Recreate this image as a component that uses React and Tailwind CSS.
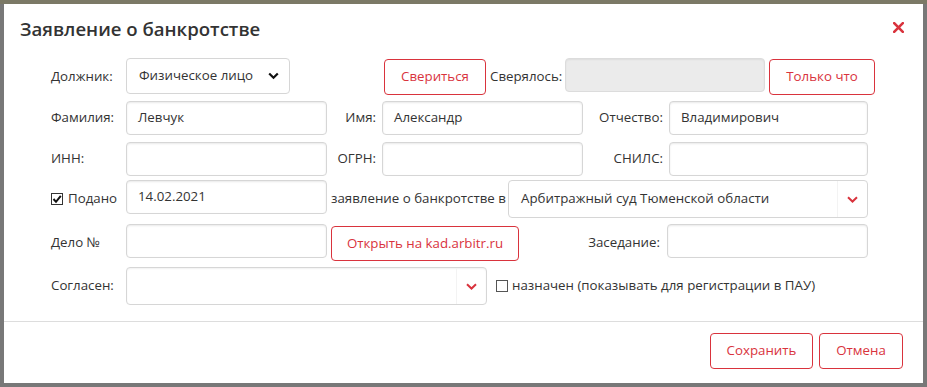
import React from "react";

const F = { fontFamily: '"Open Sans", "Noto Sans", sans-serif' };

function Input({ w, value = "", className = "" }) {
  return (
    <div
      className={`h-[34px] ${w} shrink-0 rounded-[4px] border border-[#d6d6d6] bg-white pl-[11px] flex items-center text-[13.3px] text-[#333] shadow-[inset_0_1px_2px_rgba(0,0,0,0.09)] ${className}`}
    >
      {value}
    </div>
  );
}

function Btn({ w, h = "h-[36px]", children, className = "" }) {
  return (
    <div
      className={`${w} ${h} shrink-0 rounded-[4px] border border-[#d9333d] text-[#d9333d] text-[13.3px] flex items-center justify-center ${className}`}
    >
      {children}
    </div>
  );
}

function RedChevron() {
  return (
    <svg width="11" height="7" viewBox="0 0 11 7">
      <path d="M1 1.2 L5.5 5.5 L10 1.2" fill="none" stroke="#d9333d" strokeWidth="2" />
    </svg>
  );
}

function Label({ w, children, right = false, pr = "" }) {
  return (
    <div className={`${w} shrink-0 text-[13.3px] text-[#333] flex items-center h-full whitespace-nowrap ${right ? "justify-end" : ""} ${pr}`}>
      {children}
    </div>
  );
}

export default function App() {
  return (
    <div style={F} className="w-[927px] h-[387px] bg-[#787878] border-t-[4px] border-t-[#7b7966] pl-[4px] pr-[4px] pb-[4px] overflow-hidden">
      <div className="relative w-[919px] h-[379px] bg-white">
        {/* header */}
        <div className="h-[54px] pl-[16px] pt-[13px]">
          <div className="text-[18.6px] leading-[24px] font-semibold text-[#333]">Заявление о банкротстве</div>
        </div>
        <div className="absolute left-[889px] top-[18px]">
          <svg width="11" height="11" viewBox="0 0 11 11">
            <path d="M1.2 1.2 L9.8 9.8 M9.8 1.2 L1.2 9.8" stroke="#d9333d" strokeWidth="2.6" strokeLinecap="square" />
          </svg>
        </div>

        <div className="pl-[47px]">
          {/* row 1 */}
          <div className="flex h-[37px] items-start">
            <Label w="w-[75px]">
              <span className="h-[36px] flex items-center">Должник:</span>
            </Label>
            <div className="w-[164px] h-[36px] shrink-0 rounded-[4px] border border-[#d6d6d6] bg-white flex items-center justify-between pl-[12px] pr-[10px] text-[13.3px] text-[#333]">
              <span>Физическое лицо</span>
              <svg width="11" height="8" viewBox="0 0 11 8">
                <path d="M1.2 1.5 L5.5 5.8 L9.8 1.5" fill="none" stroke="#111" strokeWidth="2.2" />
              </svg>
            </div>
            <div className="w-[94px] shrink-0" />
            <Btn w="w-[102px]" className="mt-[1px]">Свериться</Btn>
            <Label w="w-[79px]" pr="pl-[4px]">
              <span className="h-[34px] flex items-center">Сверялось:</span>
            </Label>
            <div className="w-[200px] h-[34px] shrink-0 rounded-[4px] border border-[#dcdcdc] bg-[#ebebeb] shadow-[inset_0_1px_2px_rgba(0,0,0,0.06)]" />
            <Btn w="w-[106px]" className="ml-[4px] mt-[1px]">Только что</Btn>
          </div>

          {/* row 2 */}
          <div className="flex h-[34px] mt-[6px] items-center">
            <Label w="w-[75px]">Фамилия:</Label>
            <Input w="w-[201px]" value="Левчук" />
            <Label w="w-[55px]" right pr="pr-[6px]">Имя:</Label>
            <Input w="w-[201px]" value="Александр" />
            <Label w="w-[86px]" right pr="pr-[6px]">Отчество:</Label>
            <Input w="w-[199px]" value="Владимирович" />
          </div>

          {/* row 3 */}
          <div className="flex h-[34px] mt-[7px] items-center">
            <Label w="w-[75px]">ИНН:</Label>
            <Input w="w-[201px]" />
            <Label w="w-[55px]" right pr="pr-[6px]">ОГРН:</Label>
            <Input w="w-[201px]" />
            <Label w="w-[86px]" right pr="pr-[6px]">СНИЛС:</Label>
            <Input w="w-[199px]" />
          </div>

          {/* row 4 */}
          <div className="flex h-[38px] mt-[4px] items-start">
            <Label w="w-[75px]">
              <span className="h-[34px] flex items-center gap-[5px]">
                <span className="w-[12px] h-[12px] border border-[#333] bg-white flex items-center justify-center">
                  <svg width="10" height="10" viewBox="0 0 10 10">
                    <path d="M1.5 5 L4 7.8 L8.8 1.8" fill="none" stroke="#111" strokeWidth="2" />
                  </svg>
                </span>
                Подано
              </span>
            </Label>
            <Input w="w-[201px]" value="14.02.2021" />
            <Label w="w-[181px]" pr="pl-[4px]">
              <span className="h-[34px] flex items-center">заявление о банкротстве в</span>
            </Label>
            <div className="w-[360px] h-[38px] shrink-0 rounded-[4px] border border-[#d6d6d6] bg-white flex items-center text-[13.3px] text-[#333]">
              <span className="flex-1 pl-[12px]">Арбитражный суд Тюменской области</span>
              <div className="w-[30px] h-full border-l border-l-[#f3f3f3] flex items-center justify-center">
                <RedChevron />
              </div>
            </div>
          </div>

          {/* row 5 */}
          <div className="flex h-[37px] mt-[6px] items-start">
            <Label w="w-[75px]">
              <span className="h-[34px] flex items-center">Дело №</span>
            </Label>
            <Input w="w-[201px]" />
            <Btn w="w-[188px]" h="h-[35px]" className="ml-[4px] mt-[2px]">Открыть на kad.arbitr.ru</Btn>
            <Label w="w-[148px]" right pr="pr-[7px]">
              <span className="h-[34px] flex items-center">Заседание:</span>
            </Label>
            <Input w="w-[201px]" />
          </div>

          {/* row 6 */}
          <div className="flex h-[38px] mt-[6px] items-center">
            <Label w="w-[75px]">Согласен:</Label>
            <div className="w-[361px] h-[38px] shrink-0 rounded-[4px] border border-[#d6d6d6] bg-white flex items-center shadow-[inset_0_1px_2px_rgba(0,0,0,0.06)]">
              <span className="flex-1" />
              <div className="w-[30px] h-full border-l border-l-[#f3f3f3] flex items-center justify-center">
                <RedChevron />
              </div>
            </div>
            <div className="ml-[9px] flex items-center gap-[4px] text-[13.3px] text-[#333] whitespace-nowrap">
              <span className="w-[12px] h-[12px] border border-[#555] bg-white" />
              назначен (показывать для регистрации в ПАУ)
            </div>
          </div>
        </div>

        {/* footer */}
        <div className="absolute left-0 right-0 top-[317px] border-t border-t-[#dddddd]" />
        <div className="absolute right-[20px] top-[329px] flex gap-[6px]">
          <Btn w="w-[103px]">Сохранить</Btn>
          <Btn w="w-[84px]">Отмена</Btn>
        </div>
      </div>
    </div>
  );
}
